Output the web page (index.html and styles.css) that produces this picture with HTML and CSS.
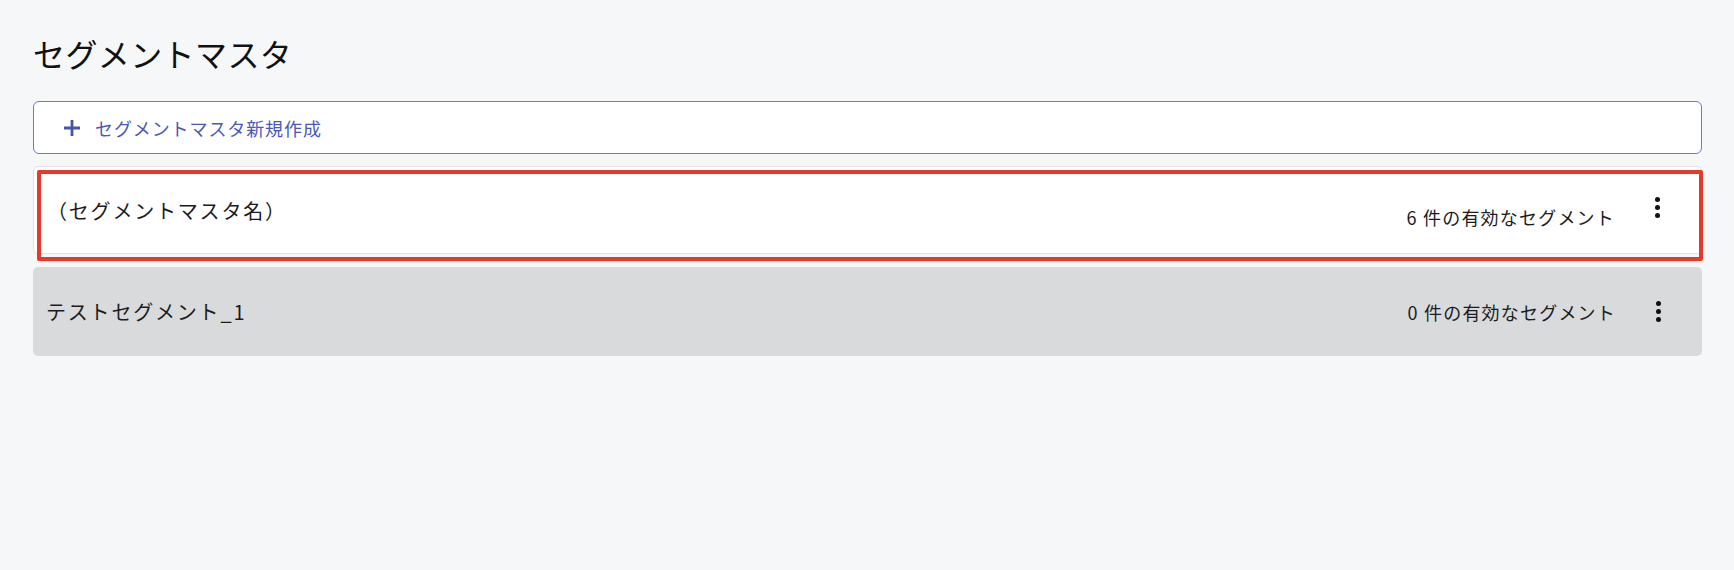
FILE: index.html
```html
<!DOCTYPE html>
<html lang="ja">
<head>
<meta charset="utf-8">
<title>セグメントマスタ</title>
<link rel="stylesheet" href="styles.css">
</head>
<body>
<main class="page">
  <h1 class="page-title">セグメントマスタ</h1>
  <button class="create-btn" type="button">
    <svg class="plus-icon" viewBox="0 0 18 18" width="18" height="18" aria-hidden="true">
      <path d="M9 1v16M1 9h16" stroke="currentColor" stroke-width="2.8" fill="none"/>
    </svg>
    <span>セグメントマスタ新規作成</span>
  </button>
  <ul class="master-list">
    <li class="master-item master-item--active">
      <span class="master-name">（セグメントマスタ名）</span>
      <span class="master-count master-count--low">6 件の有効なセグメント</span>
      <button class="kebab kebab--high" type="button" aria-label="メニュー">
        <span class="dot"></span><span class="dot"></span><span class="dot"></span>
      </button>
      <div class="highlight"></div>
    </li>
    <li class="master-item master-item--disabled">
      <span class="master-name">テストセグメント_1</span>
      <span class="master-count">0 件の有効なセグメント</span>
      <button class="kebab" type="button" aria-label="メニュー">
        <span class="dot"></span><span class="dot"></span><span class="dot"></span>
      </button>
    </li>
  </ul>
</main>
</body>
</html>
```
FILE: styles.css
```css
* { box-sizing: border-box; }
html, body { margin: 0; padding: 0; }
body {
  background: #f6f7f9;
  font-family: "Noto Sans CJK JP", "Noto Sans", sans-serif;
  color: #1c1c1e;
  width: 1734px;
  height: 570px;
  overflow: hidden;
}
.page {
  padding: 0 32px 0 33px;
}
.page-title {
  margin: 0;
  padding-top: 33px;
  font-size: 32px;
  font-weight: 400;
  line-height: 40px;
  letter-spacing: 0.4px;
  color: #111;
}
.create-btn {
  margin-top: 28px;
  display: flex;
  align-items: center;
  width: 100%;
  height: 53px;
  padding: 0 0 0 29px;
  background: #fff;
  border: 1px solid #6c78c8;
  border-radius: 6px;
  color: #4a59b5;
  font-family: inherit;
  font-size: 18px;
  letter-spacing: 0.9px;
  cursor: pointer;
}
.plus-icon {
  width: 18px;
  height: 18px;
  margin-right: 14px;
  color: #4755ae;
}
.master-list {
  list-style: none;
  margin: 12px 0 0;
  padding: 0;
  display: flex;
  flex-direction: column;
  gap: 13px;
}
.master-item {
  position: relative;
  display: flex;
  align-items: center;
  height: 88px;
  padding: 0 24px 0 13px;
  border-radius: 5px;
  font-size: 18px;
  letter-spacing: 1.6px;
}
.master-item--active {
  background: #fff;
  border: 1px solid #e1e1e3;
}
.master-item--disabled {
  background: #d9dadc;
  height: 89px;
}
.master-name {
  flex: 1;
  font-size: 20px;
  letter-spacing: 1.8px;
}
.master-count {
  margin-right: 22px;
  letter-spacing: 1.2px;
}
.master-count--low { margin-top: 14px; }
.kebab {
  width: 40px;
  height: 40px;
  display: flex;
  flex-direction: column;
  align-items: center;
  justify-content: center;
  gap: 3px;
  background: none;
  border: 0;
  padding: 0;
  cursor: pointer;
}
.kebab--high { margin-bottom: 6px; }
.dot {
  width: 5px;
  height: 5px;
  border-radius: 50%;
  background: #111;
}
.highlight {
  position: absolute;
  left: 3px;
  top: 3px;
  right: -2px;
  height: 91px;
  border: 4px solid #e5392b;
  border-radius: 2px;
  pointer-events: none;
}
```
